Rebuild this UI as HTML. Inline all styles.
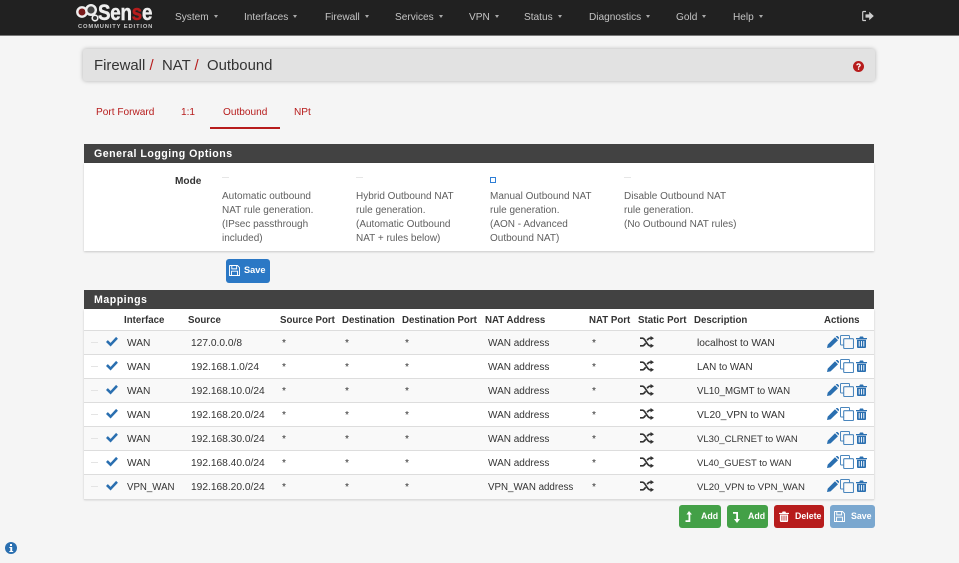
<!DOCTYPE html>
<html><head><meta charset="utf-8"><title>Firewall NAT Outbound</title>
<style>
html,body{margin:0;padding:0}
body{width:959px;height:563px;background:#f5f5f5;position:relative;overflow:hidden;font-family:"Liberation Sans",sans-serif;font-size:10px;color:#333}
.a{position:absolute;white-space:nowrap}
#nav{position:absolute;left:0;top:0;width:959px;height:35px;background:#212121;border-bottom:1px solid #777}
.n{position:absolute;top:12px;color:#c4c4c4;font-size:10.1px;white-space:nowrap}
.n:after{content:"";display:inline-block;border:2.5px solid transparent;border-top:3px solid #aaa;border-bottom:0;margin-left:5px;vertical-align:2px}
#crumb{position:absolute;left:83px;top:49px;width:792px;height:32px;background:#e2e2e2;border-radius:3px;box-shadow:0 0 4px rgba(0,0,0,.28)}
#crumb span{position:absolute;top:9px;font-size:14.9px;color:#333;white-space:nowrap}
#crumb i{font-style:normal;color:#b71c1c}
.tab{position:absolute;top:107px;color:#b71c1c;font-size:10.1px;white-space:nowrap}
.ph{position:absolute;left:84px;width:790px;height:19px;background:#424242;color:#fff;font-weight:bold;font-size:10.6px;letter-spacing:.5px;line-height:20px;text-indent:10px}
.pb{position:absolute;left:84px;width:790px;background:#fff;box-shadow:0 1px 2px rgba(0,0,0,.18)}
.opt{position:absolute;top:190px;color:#5f5f5f;font-size:10px;line-height:14px;white-space:nowrap}
.th{position:absolute;top:315px;font-weight:bold;font-size:9.7px;color:#333;white-space:nowrap}
.r{position:absolute;left:84px;width:790px;height:23px;border-top:1px solid #ddd}
.r.o{background:#f9f9f9}
.r span{position:absolute;top:7px;font-size:10.2px;color:#333;white-space:nowrap}
.r span.w{font-size:10px}
.r svg{position:absolute}
.g{left:7px;top:11px;width:7px;height:1px;background:#e4e4e4;position:absolute}
.btn{position:absolute;top:505px;height:23px;border-radius:3px;color:#fff;font-size:8.8px;font-weight:bold;line-height:23px}
.btn svg{position:absolute}
.btn b{position:absolute;top:0}
</style></head><body>
<svg width="0" height="0" style="position:absolute"><defs>
<symbol id="chk" viewBox="0 0 14 12"><path d="M1 6.5l2-2 3 3L12 1l2 2-8 8.5z" fill="#2a6fb0"/></symbol>
<symbol id="shuf" viewBox="0 0 14 12"><path d="M0 2.2h2.6c2.8 0 4.4 7.6 7.4 7.6h1M0 9.8h2.6c1.3 0 2.2-1.2 3-2.6M7.2 4.3C8 3 8.900 2.200 10 2.200h1" fill="none" stroke="#333" stroke-width="1.700"/><path d="M10.500 0l3.500 2.200-3.500 2.200zM10.500 7.600l3.500 2.200-3.500 2.200z" fill="#333"/></symbol>
<symbol id="pen" viewBox="0 0 12 12"><path d="M0 12l.7-3.400L8 1.300l3 3L3.600 11.400zM8.800.500L9.500 0c.5-.2 1-.1 1.300.2l1 1c.3.400.3.900 0 1.300l-.4.700z" fill="#2a6fb0"/></symbol>
<symbol id="cop" viewBox="0 0 14 14"><path d="M3.500 10H1.200a.7.700 0 0 1-.7-.7V1.200a.7.700 0 0 1 .7-.7h7.600a.7.700 0 0 1 .7.700V3.500" fill="none" stroke="#4a86bd" stroke-width="1"/><rect x="3.700" y="3.700" width="9.800" height="9.800" rx=".8" fill="none" stroke="#4a86bd" stroke-width="1.100"/></symbol>
<symbol id="tr" viewBox="0 0 11 12"><path d="M0 2h3.300L4 .5h3L7.700 2H11v1.200H0zM1 3.800h9V11a1 1 0 0 1-1 1H2a1 1 0 0 1-1-1z" fill="#2a6fb0"/><path d="M3.200 5v5.500M5.500 5v5.500M7.800 5v5.500" stroke="#fff" stroke-width=".9"/></symbol>
<symbol id="sv" viewBox="0 0 13 13"><path d="M1 .6h9l2.400 2.400v9.400H.6V1zM3.300 1v3.600h5.700V1M3 12V7.300h7V12" fill="none" stroke="#fff" stroke-width="1.100"/></symbol>
</defs></svg>

<div id="nav">
<svg class="a" style="left:76px;top:3px" width="24" height="20" viewBox="0 0 24 20"><circle cx="6" cy="9" r="4.700" fill="#7a1a1a" stroke="#eee" stroke-width="2.400"/><circle cx="15" cy="7" r="4.800" fill="#444" stroke="#eee" stroke-width="2.400"/><circle cx="19" cy="15" r="2.800" fill="#333" stroke="#eee" stroke-width="1.600"/></svg>
<div class="a" style="left:98px;top:0;font-size:22px;font-weight:bold;color:#eee;letter-spacing:-.2px;transform:scaleX(.85);transform-origin:left;-webkit-text-stroke:.5px #eee">Sen<span style="color:#b71c1c;-webkit-text-stroke:.5px #b71c1c">s</span>e</div>
<div class="a" style="left:78px;top:24px;font-size:5.8px;font-weight:bold;color:#c8c8c8;letter-spacing:.85px">COMMUNITY EDITION</div>
<div class="n" style="left:175px">System</div>
<div class="n" style="left:244px">Interfaces</div>
<div class="n" style="left:325px">Firewall</div>
<div class="n" style="left:395px">Services</div>
<div class="n" style="left:469px">VPN</div>
<div class="n" style="left:524px">Status</div>
<div class="n" style="left:589px">Diagnostics</div>
<div class="n" style="left:676px">Gold</div>
<div class="n" style="left:733px">Help</div>
<svg class="a" style="left:862px;top:10px" width="12" height="12" viewBox="0 0 12 12"><path d="M4 1.500H1.500a.8.800 0 0 0-.8.800v7.400a.8.800 0 0 0 .8.800H4" fill="none" stroke="#ccc" stroke-width="1.200"/><path d="M3.500 4.400h3.700V1.700L11.800 6l-4.600 4.300V7.600H3.500z" fill="#ccc"/></svg>
</div>

<div id="crumb">
<span style="left:11px">Firewall <i>/</i></span>
<span style="left:79px">NAT <i>/</i></span>
<span style="left:124px">Outbound</span>
<svg class="a" style="left:770px;top:12px" width="11" height="11" viewBox="0 0 11 11"><circle cx="5.500" cy="5.500" r="5.500" fill="#b71c1c"/><path d="M3.300 4.200c0-2.600 4.500-2.600 4.500 0 0 1.500-1.600 1.400-1.600 2.500H4.900c0-1.900 1.500-1.700 1.500-2.500 0-.8-1.700-.8-1.800.2z" fill="#fff"/><rect x="4.900" y="7.400" width="1.300" height="1.400" fill="#fff"/></svg>
</div>

<div class="tab" style="left:96px">Port Forward</div>
<div class="tab" style="left:181px">1:1</div>
<div class="tab" style="left:223px">Outbound</div>
<div class="tab" style="left:294px">NPt</div>
<div class="a" style="left:210px;top:127px;width:70px;height:2px;background:#b71c1c"></div>

<div class="ph" style="top:144px">General Logging Options</div>
<div class="pb" style="top:163px;height:88px"></div>
<div class="a" style="left:175px;top:176px;font-weight:bold;font-size:10.1px;color:#333">Mode</div>
<div class="a" style="left:490px;top:177px;width:6px;height:6px;background:#fff;border:1.500px solid #2f7fd6;box-sizing:border-box"></div>
<div class="a" style="left:222px;top:177px;width:7px;height:1px;background:#e6e6e6"></div>
<div class="a" style="left:356px;top:177px;width:7px;height:1px;background:#e6e6e6"></div>
<div class="a" style="left:624px;top:177px;width:7px;height:1px;background:#e6e6e6"></div>
<div class="opt" style="left:222px">Automatic outbound<br>NAT rule generation.<br>(IPsec passthrough<br>included)</div>
<div class="opt" style="left:356px">Hybrid Outbound NAT<br>rule generation.<br>(Automatic Outbound<br>NAT + rules below)</div>
<div class="opt" style="left:490px">Manual Outbound NAT<br>rule generation.<br>(AON - Advanced<br>Outbound NAT)</div>
<div class="opt" style="left:624px">Disable Outbound NAT<br>rule generation.<br>(No Outbound NAT rules)</div>

<div class="btn" style="left:226px;top:259px;width:44px;height:24px;background:#2b78c5;line-height:22px;font-size:9.2px"><svg style="left:3px;top:6px" width="11" height="11"><use href="#sv"/></svg><b style="left:18px">Save</b></div>

<div class="ph" style="top:290px">Mappings</div>
<div class="pb" style="top:309px;height:190px"></div>
<div class="th" style="left:124px">Interface</div>
<div class="th" style="left:188px">Source</div>
<div class="th" style="left:280px">Source Port</div>
<div class="th" style="left:342px">Destination</div>
<div class="th" style="left:402px">Destination Port</div>
<div class="th" style="left:485px">NAT Address</div>
<div class="th" style="left:589px">NAT Port</div>
<div class="th" style="left:638px">Static Port</div>
<div class="th" style="left:694px">Description</div>
<div class="th" style="left:824px">Actions</div>

<div class="r o" style="top:330px"><div class="g"></div><svg style="left:21px;top:5px" width="13" height="11"><use href="#chk"/></svg><span style="left:43px">WAN</span><span style="left:107px">127.0.0.0/8</span><span style="left:198px">*</span><span style="left:261px">*</span><span style="left:321px">*</span><span class="w" style="left:404px">WAN address</span><span style="left:508px">*</span><svg style="left:556px;top:5px" width="14" height="12"><use href="#shuf"/></svg><span style="left:613px">localhost to WAN</span><svg style="left:743px;top:5px" width="12" height="12"><use href="#pen"/></svg><svg style="left:756px;top:4px" width="14" height="14"><use href="#cop"/></svg><svg style="left:772px;top:5px" width="11" height="12"><use href="#tr"/></svg></div>
<div class="r" style="top:354px"><div class="g"></div><svg style="left:21px;top:5px" width="13" height="11"><use href="#chk"/></svg><span style="left:43px">WAN</span><span style="left:107px">192.168.1.0/24</span><span style="left:198px">*</span><span style="left:261px">*</span><span style="left:321px">*</span><span class="w" style="left:404px">WAN address</span><span style="left:508px">*</span><svg style="left:556px;top:5px" width="14" height="12"><use href="#shuf"/></svg><span style="left:613px;font-size:9.9px">LAN to WAN</span><svg style="left:743px;top:5px" width="12" height="12"><use href="#pen"/></svg><svg style="left:756px;top:4px" width="14" height="14"><use href="#cop"/></svg><svg style="left:772px;top:5px" width="11" height="12"><use href="#tr"/></svg></div>
<div class="r o" style="top:378px"><div class="g"></div><svg style="left:21px;top:5px" width="13" height="11"><use href="#chk"/></svg><span style="left:43px">WAN</span><span style="left:107px">192.168.10.0/24</span><span style="left:198px">*</span><span style="left:261px">*</span><span style="left:321px">*</span><span class="w" style="left:404px">WAN address</span><span style="left:508px">*</span><svg style="left:556px;top:5px" width="14" height="12"><use href="#shuf"/></svg><span style="left:613px;font-size:9.7px">VL10_MGMT to WAN</span><svg style="left:743px;top:5px" width="12" height="12"><use href="#pen"/></svg><svg style="left:756px;top:4px" width="14" height="14"><use href="#cop"/></svg><svg style="left:772px;top:5px" width="11" height="12"><use href="#tr"/></svg></div>
<div class="r" style="top:402px"><div class="g"></div><svg style="left:21px;top:5px" width="13" height="11"><use href="#chk"/></svg><span style="left:43px">WAN</span><span style="left:107px">192.168.20.0/24</span><span style="left:198px">*</span><span style="left:261px">*</span><span style="left:321px">*</span><span class="w" style="left:404px">WAN address</span><span style="left:508px">*</span><svg style="left:556px;top:5px" width="14" height="12"><use href="#shuf"/></svg><span style="left:613px">VL20_VPN to WAN</span><svg style="left:743px;top:5px" width="12" height="12"><use href="#pen"/></svg><svg style="left:756px;top:4px" width="14" height="14"><use href="#cop"/></svg><svg style="left:772px;top:5px" width="11" height="12"><use href="#tr"/></svg></div>
<div class="r o" style="top:426px"><div class="g"></div><svg style="left:21px;top:5px" width="13" height="11"><use href="#chk"/></svg><span style="left:43px">WAN</span><span style="left:107px">192.168.30.0/24</span><span style="left:198px">*</span><span style="left:261px">*</span><span style="left:321px">*</span><span class="w" style="left:404px">WAN address</span><span style="left:508px">*</span><svg style="left:556px;top:5px" width="14" height="12"><use href="#shuf"/></svg><span style="left:613px;font-size:9.55px">VL30_CLRNET to WAN</span><svg style="left:743px;top:5px" width="12" height="12"><use href="#pen"/></svg><svg style="left:756px;top:4px" width="14" height="14"><use href="#cop"/></svg><svg style="left:772px;top:5px" width="11" height="12"><use href="#tr"/></svg></div>
<div class="r" style="top:450px"><div class="g"></div><svg style="left:21px;top:5px" width="13" height="11"><use href="#chk"/></svg><span style="left:43px">WAN</span><span style="left:107px">192.168.40.0/24</span><span style="left:198px">*</span><span style="left:261px">*</span><span style="left:321px">*</span><span class="w" style="left:404px">WAN address</span><span style="left:508px">*</span><svg style="left:556px;top:5px" width="14" height="12"><use href="#shuf"/></svg><span style="left:613px;font-size:9.45px">VL40_GUEST to WAN</span><svg style="left:743px;top:5px" width="12" height="12"><use href="#pen"/></svg><svg style="left:756px;top:4px" width="14" height="14"><use href="#cop"/></svg><svg style="left:772px;top:5px" width="11" height="12"><use href="#tr"/></svg></div>
<div class="r o" style="top:474px;height:24px;border-bottom:1px solid #ddd"><div class="g"></div><svg style="left:21px;top:5px" width="13" height="11"><use href="#chk"/></svg><span style="left:43px;font-size:9.7px">VPN_WAN</span><span style="left:107px">192.168.20.0/24</span><span style="left:198px">*</span><span style="left:261px">*</span><span style="left:321px">*</span><span style="left:404px;font-size:9.75px">VPN_WAN address</span><span style="left:508px">*</span><svg style="left:556px;top:5px" width="14" height="12"><use href="#shuf"/></svg><span style="left:613px;font-size:9.6px">VL20_VPN to VPN_WAN</span><svg style="left:743px;top:5px" width="12" height="12"><use href="#pen"/></svg><svg style="left:756px;top:4px" width="14" height="14"><use href="#cop"/></svg><svg style="left:772px;top:5px" width="11" height="12"><use href="#tr"/></svg></div>

<div class="btn" style="left:679px;width:42px;background:#43a047"><svg style="left:5px;top:6px" width="11" height="12" viewBox="0 0 11 12"><path d="M5 0l3 3.500H6.300V11H1.500V9.300h3V3.500H2.500z" fill="#fff"/></svg><b style="left:22px">Add</b></div>
<div class="btn" style="left:727px;width:41px;background:#43a047"><svg style="left:5px;top:6px" width="11" height="12" viewBox="0 0 11 12"><path d="M1 1h5v7h2l-3 4-3-4h2.200V2.700H1z" fill="#fff"/></svg><b style="left:21px">Add</b></div>
<div class="btn" style="left:774px;width:50px;background:#b71c1c"><svg style="left:5px;top:6px" width="10" height="11" viewBox="0 0 11 12"><path d="M0 2h3.300L4 .5h3L7.700 2H11v1.200H0zM1 3.800h9V11a1 1 0 0 1-1 1H2a1 1 0 0 1-1-1z" fill="#fff"/><path d="M3.200 5v5.500M5.500 5v5.500M7.800 5v5.500" stroke="#b71c1c" stroke-width=".9"/></svg><b style="left:21px">Delete</b></div>
<div class="btn" style="left:830px;width:45px;background:#7aa7cf"><svg style="left:4px;top:6px" width="11" height="11"><use href="#sv"/></svg><b style="left:21px">Save</b></div>

<svg class="a" style="left:5px;top:542px" width="12" height="12" viewBox="0 0 12 12"><circle cx="6" cy="6" r="6" fill="#2a6fb0"/><rect x="5" y="2" width="2" height="2" fill="#fff"/><path d="M4.300 5h2.900v4h1v1H4.300V9h1V6h-1z" fill="#fff"/></svg>
</body></html>
